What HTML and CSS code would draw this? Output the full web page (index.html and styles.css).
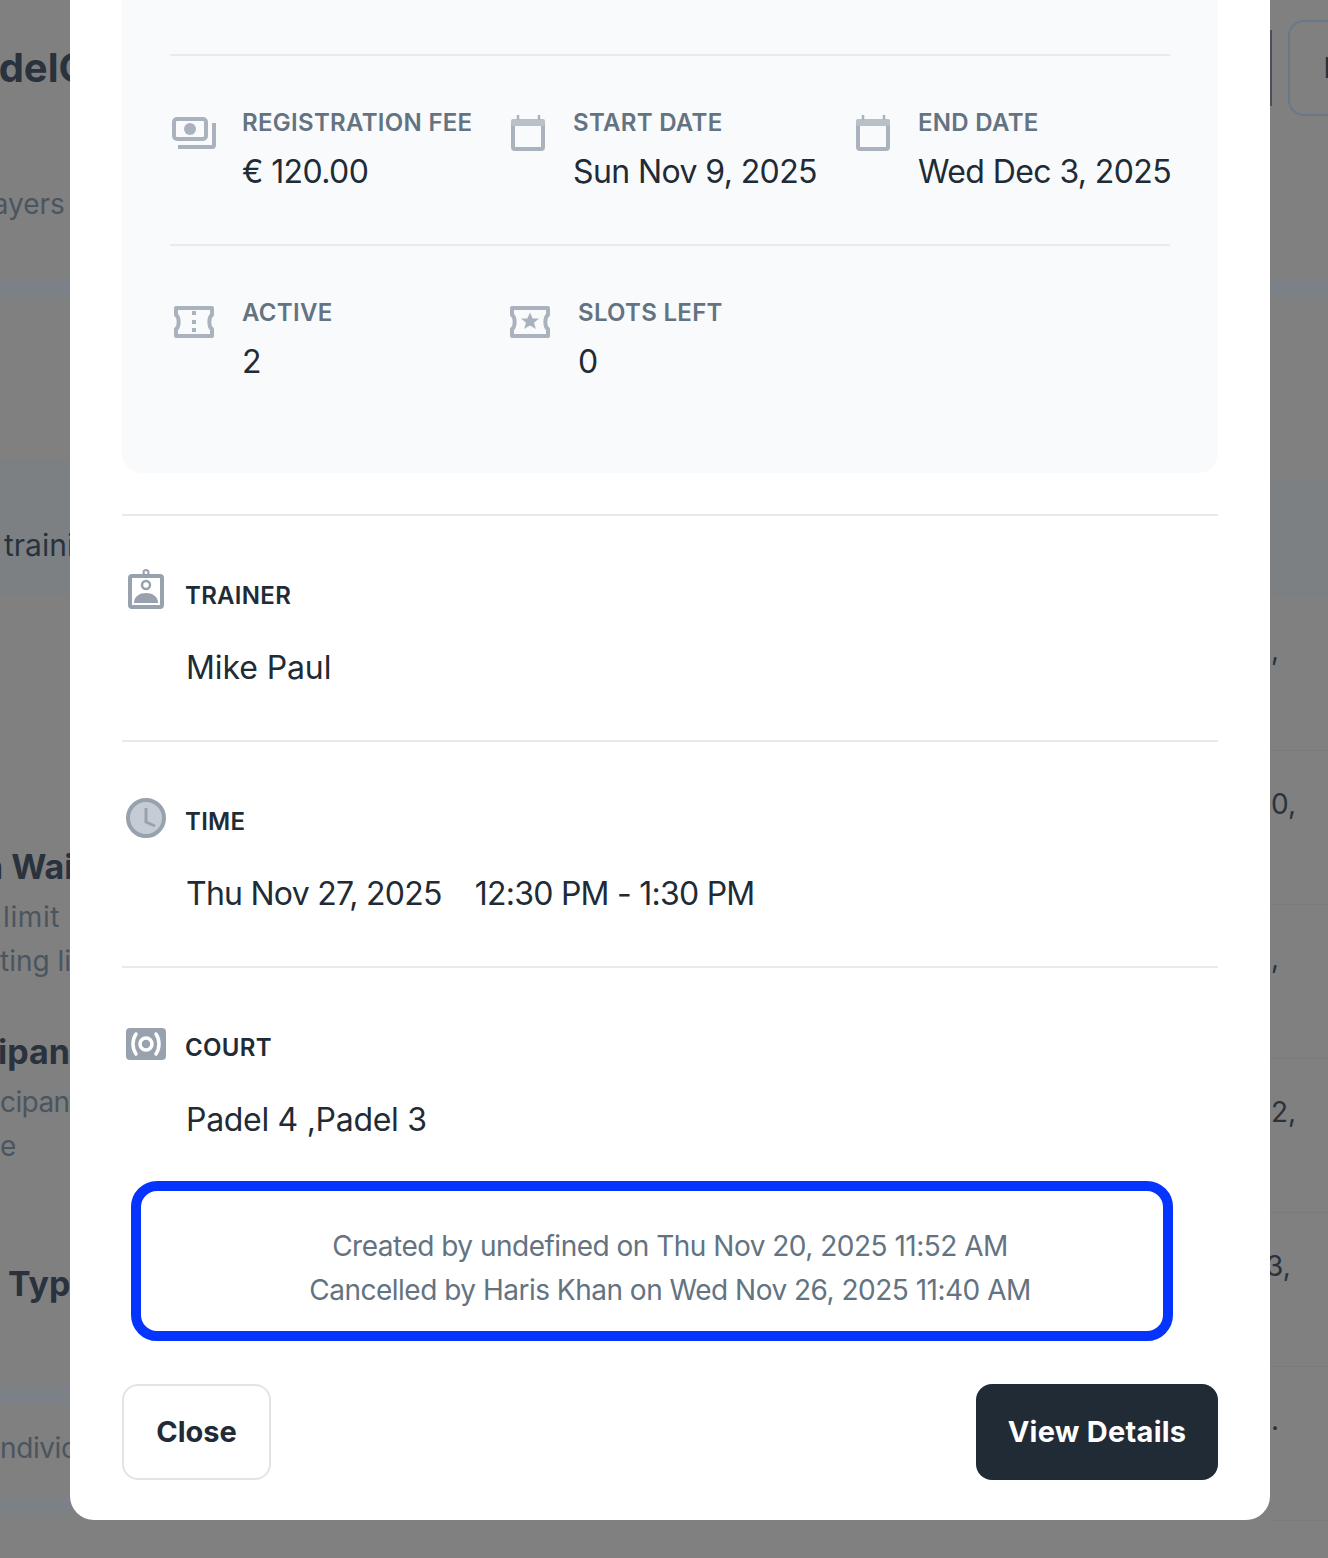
FILE: index.html
```html
<!DOCTYPE html>
<html lang="en">
<head>
    <meta charset="UTF-8">
    <meta name="viewport" content="width=device-width, initial-scale=1.0">
    <title>Class Details</title>
    <link rel="stylesheet" href="styles.css">
</head>
<body>

<div class="page">
    <div class="page-left">
        <div class="bg-title">PadelClass</div>
        <div class="bg-players">Players</div>
        <div class="band band-top"></div>
        <div class="bg-training">training</div>
        <div class="bg-heading bg-waiting">n Waiting</div>
        <div class="bg-line bg-limit">limit</div>
        <div class="bg-line">ting limit</div>
        <div class="bg-heading bg-participant">ipants</div>
        <div class="bg-line bg-cipants">cipants</div>
        <div class="bg-line">e</div>
        <div class="bg-heading bg-type">Type</div>
        <div class="band band-a"></div>
        <div class="bg-line bg-individual">ndividual</div>
        <div class="band band-b"></div>
    </div>
    <div class="page-right">
        <div class="bg-actions">
            <span class="bg-sliver"></span>
            <span class="bg-button">E</span>
        </div>
        <div class="band band-right"></div>
        <div class="band-tall"></div>
        <div class="bg-row">,</div>
        <div class="bg-row">0,</div>
        <div class="bg-row">,</div>
        <div class="bg-row">2,</div>
        <div class="bg-row bg-row-shift">3,</div>
        <div class="bg-row">.</div>
    </div>
</div>

<div class="overlay">
    <div class="modal">
        <div class="panel">
            <div class="stat-row">
                <div class="stat">
                    <svg class="stat-icon icon-lg" viewBox="0 0 48 48" fill="none" stroke="#aab3bd" stroke-width="4">
                        <rect x="4" y="14" width="32" height="20" rx="3"/>
                        <circle cx="20" cy="24" r="6" fill="#aab3bd" stroke="none"/>
                        <path d="M8 42H42a2 2 0 0 0 2-2V18"/>
                    </svg>
                    <div>
                        <div class="stat-label">REGISTRATION FEE</div>
                        <div class="stat-value">€ 120.00</div>
                    </div>
                </div>
                <div class="stat">
                    <svg class="stat-icon icon-sm" viewBox="0 0 39 48" fill="none" stroke="#aab3bd" stroke-width="4">
                        <rect x="3" y="16" width="30" height="28" rx="2"/>
                        <rect x="1" y="14" width="34" height="7" rx="2" fill="#b9c0c8" stroke="none"/>
                        <path d="M8 10V15M29 10V15" stroke-width="2.5"/>
                    </svg>
                    <div>
                        <div class="stat-label">START DATE</div>
                        <div class="stat-value">Sun Nov 9, 2025</div>
                    </div>
                </div>
                <div class="stat">
                    <svg class="stat-icon icon-sm" viewBox="0 0 39 48" fill="none" stroke="#aab3bd" stroke-width="4">
                        <rect x="3" y="16" width="30" height="28" rx="2"/>
                        <rect x="1" y="14" width="34" height="7" rx="2" fill="#b9c0c8" stroke="none"/>
                        <path d="M8 10V15M29 10V15" stroke-width="2.5"/>
                    </svg>
                    <div>
                        <div class="stat-label">END DATE</div>
                        <div class="stat-value">Wed Dec 3, 2025</div>
                    </div>
                </div>
            </div>
            <div class="stat-row">
                <div class="stat">
                    <svg class="stat-icon icon-lg" viewBox="0 0 48 48" fill="none" stroke="#aab3bd" stroke-width="4">
                        <path d="M6 14H42V21C38.5 23 38.5 33 42 35V42H6V35C9.5 33 9.5 23 6 21Z" stroke-linejoin="round"/>
                        <path d="M22 17h4v4h-4zM22 26h4v4h-4zM22 34h4v4h-4z" fill="#aab3bd" stroke="none"/>
                    </svg>
                    <div>
                        <div class="stat-label">ACTIVE</div>
                        <div class="stat-value">2</div>
                    </div>
                </div>
                <div class="stat">
                    <svg class="stat-icon icon-md" viewBox="0 0 44 48" fill="none" stroke="#aab3bd" stroke-width="4">
                        <path d="M2 14H38V21C34.5 23 34.5 33 38 35V42H2V35C5.5 33 5.5 23 2 21Z" stroke-linejoin="round"/>
                        <path d="M20 18.5l2.7 6h6.3l-5 4.2 1.9 6.3-5.9-3.6-5.9 3.6 1.9-6.3-5-4.2h6.3z" fill="#aab3bd" stroke="none"/>
                    </svg>
                    <div>
                        <div class="stat-label">SLOTS LEFT</div>
                        <div class="stat-value">0</div>
                    </div>
                </div>
            </div>
        </div>

        <div class="section">
            <div class="section-head">
                <svg class="section-icon" viewBox="0 0 48 48" fill="none" stroke="#98a2ae">
                    <rect x="8" y="5" width="32" height="31" rx="2" stroke-width="4"/>
                    <circle cx="24" cy="1.5" r="2.5" stroke-width="2"/>
                    <circle cx="24" cy="14" r="4" stroke-width="2.5"/>
                    <path d="M12 32C12 25 18 22 24 22S36 25 36 32Z" fill="#98a2ae" stroke="none"/>
                </svg>
                <span class="section-label">TRAINER</span>
            </div>
            <div class="section-value">Mike Paul</div>
        </div>

        <div class="section">
            <div class="section-head">
                <svg class="section-icon" viewBox="0 0 48 48" fill="#c6ccd3" stroke="#98a2ae">
                    <circle cx="24" cy="21" r="18" stroke-width="4"/>
                    <path d="M24 11V25L33 29" fill="none" stroke-width="3"/>
                </svg>
                <span class="section-label">TIME</span>
            </div>
            <div class="section-value section-time">Thu Nov 27, 2025<span class="time-range">12:30 PM - 1:30 PM</span></div>
        </div>

        <div class="section section-last">
            <div class="section-head">
                <svg class="section-icon" viewBox="0 0 48 48" fill="none" stroke="#fff">
                    <rect x="4" y="5" width="40" height="32" rx="4" fill="#98a2ae" stroke="none"/>
                    <circle cx="24" cy="21" r="6" stroke-width="3.5"/>
                    <path d="M14 11C10 17 10 25 14 31M34 11C38 17 38 25 34 31" stroke-width="3.5" stroke-linecap="round"/>
                </svg>
                <span class="section-label">COURT</span>
            </div>
            <div class="section-value section-courts">Padel 4 ,Padel 3</div>
        </div>

        <div class="audit">
            <div>Created by undefined on Thu Nov 20, 2025 11:52 AM</div>
            <div>Cancelled by Haris Khan on Wed Nov 26, 2025 11:40 AM</div>
            <div class="highlight"></div>
        </div>

        <div class="modal-actions">
            <button class="btn btn-close">Close</button>
            <button class="btn btn-view">View Details</button>
        </div>
    </div>
</div>

</body>
</html>
```

FILE: styles.css
```css
* {
    box-sizing: border-box;
}
html, body {
    margin: 0;
    height: 100%;
    overflow: hidden;
}
body {
    font-family: Inter, "Noto Sans", sans-serif;
    background-color: #808080;
    color: #212b36;
}

/* page behind the dialog */
.page {
    display: flex;
    justify-content: space-between;
    height: 1558px;
    overflow: hidden;
}
.page-left {
    width: 70px;
    white-space: nowrap;
    color: #29323d;
}
.page-right {
    width: 58px;
    white-space: nowrap;
    color: #29323d;
}
.bg-title {
    margin: 44px 0 0 -50px;
    font-size: 40px;
    line-height: 48px;
    font-weight: 700;
}
.bg-players {
    margin: 90px 0 0 -32px;
    font-size: 28px;
    line-height: 44px;
    color: #4b5560;
}
.band {
    background-color: #7b8186;
}
.band-top {
    margin-top: 54px;
    height: 18px;
}
.bg-training {
    margin-top: 162px;
    padding: 63px 0 28px 4px;
    height: 135px;
    font-size: 30px;
    line-height: 44px;
    background-color: #7d8082;
}
.bg-heading {
    font-size: 34px;
    line-height: 44px;
    font-weight: 700;
}
.bg-waiting {
    margin: 250px 0 0 -18px;
}
.bg-line {
    font-size: 28px;
    line-height: 44px;
    color: #4b5560;
}
.bg-limit {
    margin: 6px 0 0 3px;
    letter-spacing: 0.6px;
}
.bg-cipants {
    margin-top: 6px;
    letter-spacing: -0.6px;
}
.bg-participant {
    margin: 47px 0 0 -2px;
}
.bg-type {
    margin: 94px 0 0 8px;
}
.band-a {
    margin-top: 80px;
    height: 17px;
}
.bg-individual {
    margin-top: 23px;
    letter-spacing: -0.4px;
}
.band-b {
    margin-top: 28px;
    height: 15px;
}
.bg-actions {
    display: flex;
    align-items: center;
    gap: 16px;
    margin-top: 20px;
    width: 100px;
}
.bg-sliver {
    width: 2px;
    height: 76px;
    background-color: #4c5058;
}
.bg-button {
    width: 80px;
    height: 96px;
    padding-left: 34px;
    border: 2px solid #677888;
    border-radius: 16px;
    font-size: 28px;
    line-height: 92px;
    font-weight: 700;
}
.band-right {
    margin-top: 164px;
    height: 18px;
}
.band-tall {
    margin-top: 184px;
    height: 115px;
    background-color: #7d8082;
}
.bg-row {
    height: 154px;
    padding: 31px 0 0 1px;
    font-size: 28px;
    line-height: 44px;
    border-bottom: 1px solid #7b7b7b;
}
.bg-row-shift {
    margin-left: -5px;
}

/* dialog */
.overlay {
    position: fixed;
    inset: 0;
    display: flex;
    justify-content: center;
    align-items: flex-end;
    padding: 0 0 38px 12px;
}
.modal {
    flex: none;
    width: 1200px;
    padding: 0 52px 40px;
    background-color: #ffffff;
    border-radius: 0 0 24px 24px;
}
.panel {
    padding: 59px 48px 0;
    background-color: #f9fafb;
    border-radius: 0 0 20px 20px;
}
.stat-row {
    display: grid;
    grid-template-columns: 340px 345px 1fr;
    padding: 49px 0 48px;
    border-top: 2px solid #e8eaed;
}
.stat-row + .stat-row {
    height: 229px;
}
.stat {
    display: flex;
    gap: 24px;
    white-space: nowrap;
}
.stat-icon {
    flex: none;
    height: 48px;
}
.stat-row + .stat-row .stat-icon {
    margin-top: -1px;
}
.icon-lg {
    width: 48px;
}
.icon-md {
    width: 44px;
}
.icon-sm {
    width: 39px;
}
.stat-label {
    font-size: 24px;
    line-height: 36px;
    font-weight: 600;
    letter-spacing: 0.3px;
    color: #637381;
}
.stat-value {
    margin-top: 7px;
    font-size: 32px;
    line-height: 48px;
    letter-spacing: -0.6px;
}
.section {
    padding: 55px 0 48px;
    border-top: 2px solid #e8eaed;
}
.panel + .section {
    margin-top: 41px;
}
.section-last {
    padding-bottom: 0;
}
.section-head {
    display: flex;
    align-items: center;
    gap: 15px;
    height: 48px;
}
.section-icon {
    flex: none;
    width: 48px;
    height: 48px;
    overflow: visible;
}
.section-label {
    font-size: 24px;
    font-weight: 600;
    letter-spacing: 0.3px;
}
.section-value {
    margin-top: 25px;
    padding-left: 64px;
    font-size: 32px;
    line-height: 48px;
    letter-spacing: -0.1px;
}
.section-time {
    letter-spacing: -0.75px;
}
.section-courts {
    letter-spacing: -0.3px;
}
.time-range {
    margin-left: 33px;
}
.audit {
    position: relative;
    margin-top: 80px;
    font-size: 28px;
    line-height: 44px;
    letter-spacing: -0.5px;
    text-align: center;
    color: #637381;
}
/* review highlight drawn over the audit text */
.highlight {
    position: absolute;
    top: -43px;
    bottom: -29px;
    left: 9px;
    right: 45px;
    border: 10px solid #0634ff;
    border-radius: 26px;
}
.modal-actions {
    display: flex;
    justify-content: space-between;
    margin-top: 72px;
}
.btn {
    height: 96px;
    padding: 0 0 2px;
    border-radius: 16px;
    font-family: inherit;
    font-size: 29px;
    font-weight: 700;
    cursor: pointer;
}
.btn-close {
    width: 149px;
    background-color: #ffffff;
    border: 2px solid #e1e4e8;
    color: #212b36;
}
.btn-view {
    width: 242px;
    background-color: #212b36;
    border: none;
    color: #ffffff;
    letter-spacing: 0.25px;
}
```
